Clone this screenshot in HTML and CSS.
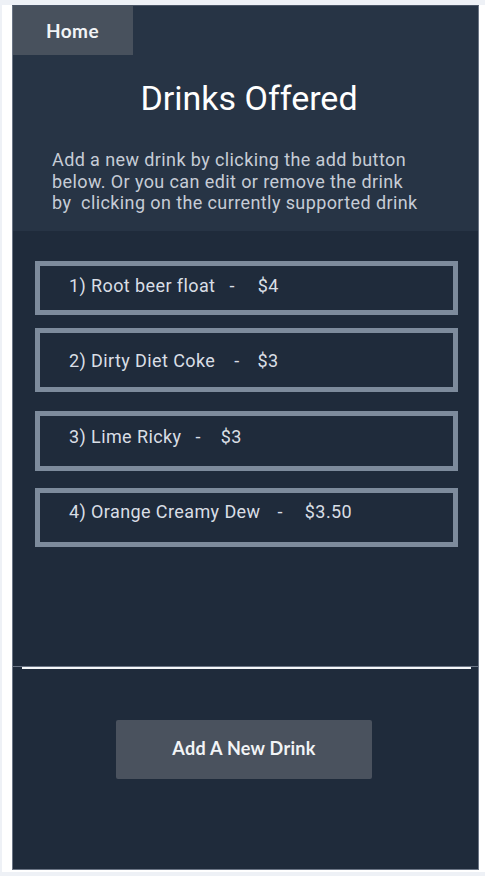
FILE: index.html
```html
<!DOCTYPE html>
<html>
<head>
<meta charset="utf-8">
<link rel="stylesheet" href="styles.css">
</head>
<body>
<div class="frame">
  <div class="panel">
    <header class="top">
      <nav class="nav"><a class="home">Home</a></nav>
      <h1 class="title">Drinks Offered</h1>
      <p class="intro">Add a new drink by clicking the add button below. Or you can edit or remove the drink by&nbsp; clicking on the currently supported drink</p>
    </header>
    <section class="list">
      <div class="drink d1"><span class="name">1) Root beer float</span><span class="dash">-</span><span class="price">$4</span></div>
      <div class="drink d2"><span class="name">2) Dirty Diet Coke</span><span class="dash">-</span><span class="price">$3</span></div>
      <div class="drink d3"><span class="name">3) Lime Ricky</span><span class="dash">-</span><span class="price">$3</span></div>
      <div class="drink d4"><span class="name">4) Orange Creamy Dew</span><span class="dash">-</span><span class="price">$3.50</span></div>
    </section>
    <div class="rule"></div>
    <footer class="foot">
      <button class="add">Add A New Drink</button>
    </footer>
  </div>
</div>
</body>
</html>
```
FILE: styles.css
```css
html, body { margin: 0; padding: 0; }
body {
  background: #eef1f6;
  font-family: Roboto, "Liberation Sans", sans-serif;
  height: 876px;
  overflow: hidden;
}
.frame {
  margin: 5px 0 0 2px;
  background: #ffffff;
  padding: 0 6px 2px 10px;
}
.panel {
  border: 1px solid #6b7585;
  border-top: 1px solid #4a5566;
  background: #1f2b3b;
  height: 863px;
  display: flex;
  flex-direction: column;
}
.top {
  background: #273445;
  height: 225px;
  display: flex;
  flex-direction: column;
}
.nav { display: flex; }
.home {
  display: flex;
  align-items: center;
  justify-content: center;
  width: 119px;
  height: 49px;
  background: #48515d;
  color: #f2f4f6;
  font-family: Lato, "Open Sans", sans-serif;
  font-weight: 700;
  font-size: 19px;
  letter-spacing: 0.4px;
  padding-right: 1px;
}
.title {
  margin: 22px 0 0 0;
  text-align: center;
  color: #ffffff;
  font-weight: 400;
  font-size: 34px;
  line-height: 42px;
  padding-left: 7px;
}
.intro {
  margin: 30px 0 0 39px;
  width: 373px;
  color: #c6ccd6;
  font-size: 18px;
  letter-spacing: 0.4px;
  line-height: 21.5px;
}
.list {
  height: 435px;
  box-sizing: border-box;
  padding: 30px 20px 0 22px;
  display: flex;
  flex-direction: column;
}
.drink {
  box-sizing: border-box;
  border: 5px solid #7d8b9c;
  color: #d9dee5;
  font-size: 18px;
  letter-spacing: 0.4px;
  line-height: 21px;
  padding-left: 29px;
  display: flex;
  align-items: flex-start;
}
.d1 { height: 54px; padding-top: 9px; }
.d2 { height: 64px; margin-top: 13px; padding-top: 17px; }
.d3 { height: 60px; margin-top: 19px; padding-top: 10px; }
.d4 { height: 59px; margin-top: 17px; padding-top: 8px; }
.d1 .dash { margin-left: 14px; }
.d1 .price { margin-left: 23px; }
.d2 .dash { margin-left: 19px; }
.d2 .price { margin-left: 18px; }
.d3 .dash { margin-left: 14px; }
.d3 .price { margin-left: 20px; }
.d4 .dash { margin-left: 17px; }
.d4 .price { margin-left: 22px; }
.rule {
  height: 1px;
  background: #6b7585;
}
.rule::after {
  content: "";
  display: block;
  margin: 1px 7px 0 9px;
  height: 2px;
  background: #f4f6f8;
}
.foot {
  flex: 1;
  display: flex;
  justify-content: center;
  padding-top: 53px;
  padding-right: 3px;
}
.add {
  width: 256px;
  height: 59px;
  border: none;
  border-radius: 2px;
  background: #4a525e;
  color: #f2f4f6;
  font-family: Lato, "Open Sans", sans-serif;
  font-weight: 700;
  font-size: 18px;
  letter-spacing: 0.3px;
  padding: 0 0 3px 0;
}
```
